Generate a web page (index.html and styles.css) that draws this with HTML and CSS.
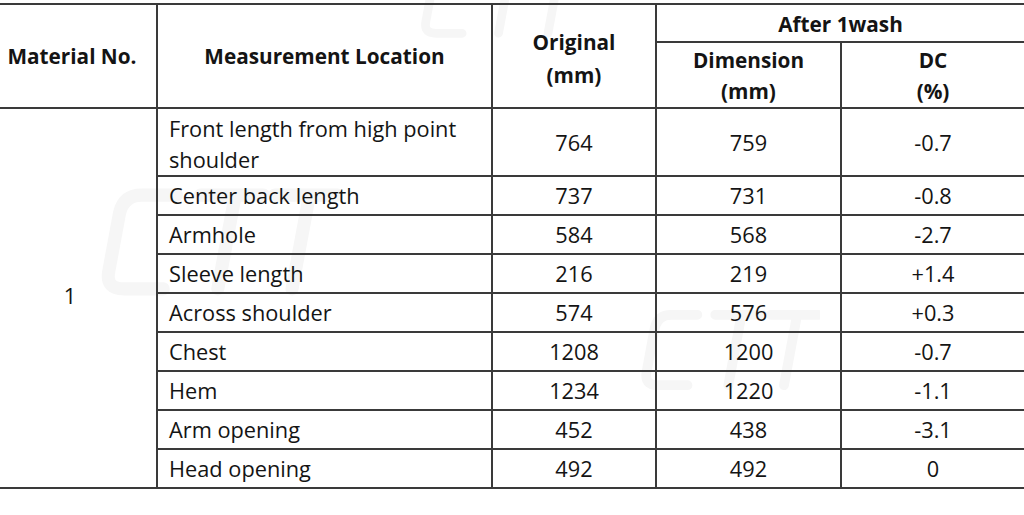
FILE: index.html
```html
<!DOCTYPE html>
<html>
<head>
<meta charset="utf-8">
<link rel="stylesheet" href="styles.css">
</head>
<body>
<div class="page">
<svg class="wm wm-a" viewBox="0 0 220 110" aria-hidden="true">
  <path d="M70 12 H38 Q22 12 18 28 L8 82 Q5 98 22 98 H58" />
  <path d="M92 12 H150 M124 12 L108 98" />
  <path d="M160 12 H218 M192 12 L176 98" />
</svg>
<svg class="wm wm-b" viewBox="0 0 220 110" aria-hidden="true">
  <path d="M70 12 H38 Q22 12 18 28 L8 82 Q5 98 22 98 H58" />
  <path d="M92 12 H150 M124 12 L108 98" />
  <path d="M160 12 H218 M192 12 L176 98" />
</svg>
<svg class="wm wm-c" viewBox="0 0 220 110" aria-hidden="true">
  <path d="M70 12 H38 Q22 12 18 28 L8 82 Q5 98 22 98 H58" />
  <path d="M92 12 H150 M124 12 L108 98" />
  <path d="M160 12 H218 M192 12 L176 98" />
</svg>
<table class="dc-table">
  <colgroup>
    <col class="c1"><col class="c2"><col class="c3"><col class="c4"><col class="c5">
  </colgroup>
  <thead>
    <tr class="h1">
      <th rowspan="2" class="first">Material No.</th>
      <th rowspan="2">Measurement Location</th>
      <th rowspan="2" class="orig">Original<br>(mm)</th>
      <th colspan="2" class="last top">After 1wash</th>
    </tr>
    <tr class="h2">
      <th class="two">Dimension<br>(mm)</th>
      <th class="last two">DC<br>(%)</th>
    </tr>
  </thead>
  <tbody>
    <tr class="tall">
      <td rowspan="9" class="first mat">1</td>
      <td class="loc">Front length from high point<br>shoulder</td>
      <td>764</td><td>759</td><td class="last">-0.7</td>
    </tr>
    <tr><td class="loc">Center back length</td><td>737</td><td>731</td><td class="last">-0.8</td></tr>
    <tr><td class="loc">Armhole</td><td>584</td><td>568</td><td class="last">-2.7</td></tr>
    <tr><td class="loc">Sleeve length</td><td>216</td><td>219</td><td class="last">+1.4</td></tr>
    <tr><td class="loc">Across shoulder</td><td>574</td><td>576</td><td class="last">+0.3</td></tr>
    <tr><td class="loc">Chest</td><td>1208</td><td>1200</td><td class="last">-0.7</td></tr>
    <tr><td class="loc">Hem</td><td>1234</td><td>1220</td><td class="last">-1.1</td></tr>
    <tr><td class="loc">Arm opening</td><td>452</td><td>438</td><td class="last">-3.1</td></tr>
    <tr><td class="loc">Head opening</td><td>492</td><td>492</td><td class="last">0</td></tr>
  </tbody>
</table>
</div>
</body>
</html>
```

FILE: styles.css
```css
html, body {
  margin: 0;
  padding: 0;
  background: #ffffff;
}
.page {
  position: relative;
  padding-top: 3px;
  width: 1024px;
  height: 512px;
  overflow: hidden;
}
.wm {
  position: absolute;
  z-index: 0;
  fill: none;
  stroke: #f6f6f6;
  stroke-width: 12;
  stroke-linecap: round;
  stroke-linejoin: round;
}
.wm-a { left: 100px; top: 182px; width: 240px; height: 120px; }
.wm-b { left: 640px; top: 300px; width: 180px; height: 100px; }
.wm-c { left: 420px; top: -40px; width: 160px; height: 84px; }
.dc-table {
  position: relative;
  z-index: 1;
  width: 1024px;
  border-collapse: collapse;
  table-layout: fixed;
  font-family: "Open Sans", "Noto Sans", sans-serif;
  color: #141414;
}
.c1 { width: 157px; }
.c2 { width: 335px; }
.c3 { width: 164px; }
.c4 { width: 185px; }
.c5 { width: 183px; }
.dc-table th, .dc-table td {
  border: 2px solid #3a3a3a;
  text-align: center;
  vertical-align: middle;
  padding: 0 6px;
  box-sizing: border-box;
}
.dc-table th {
  font-weight: 700;
  font-size: 20.75px;
  line-height: 33px;
}
.dc-table th.first { padding-right: 18px; }
.dc-table th.orig { padding-top: 6px; }
.dc-table th.two { line-height: 31px; padding-top: 2px; }
.dc-table th.top { padding-top: 3px; }
.dc-table td {
  font-weight: 400;
  font-size: 21.75px;
  line-height: 31px;
  height: 39px;
}
.dc-table .first { border-left: none; }
.dc-table .last { border-right: none; }
.h1 th { height: 38px; }
.h2 th { height: 64px; }
.dc-table tr.tall td { height: 68px; }
.dc-table td.loc {
  text-align: left;
  padding-left: 11px;
}
.dc-table td.mat { padding-bottom: 6px; padding-right: 22px; }
.dc-table tr.tall td.loc { padding-top: 4px; }
```
